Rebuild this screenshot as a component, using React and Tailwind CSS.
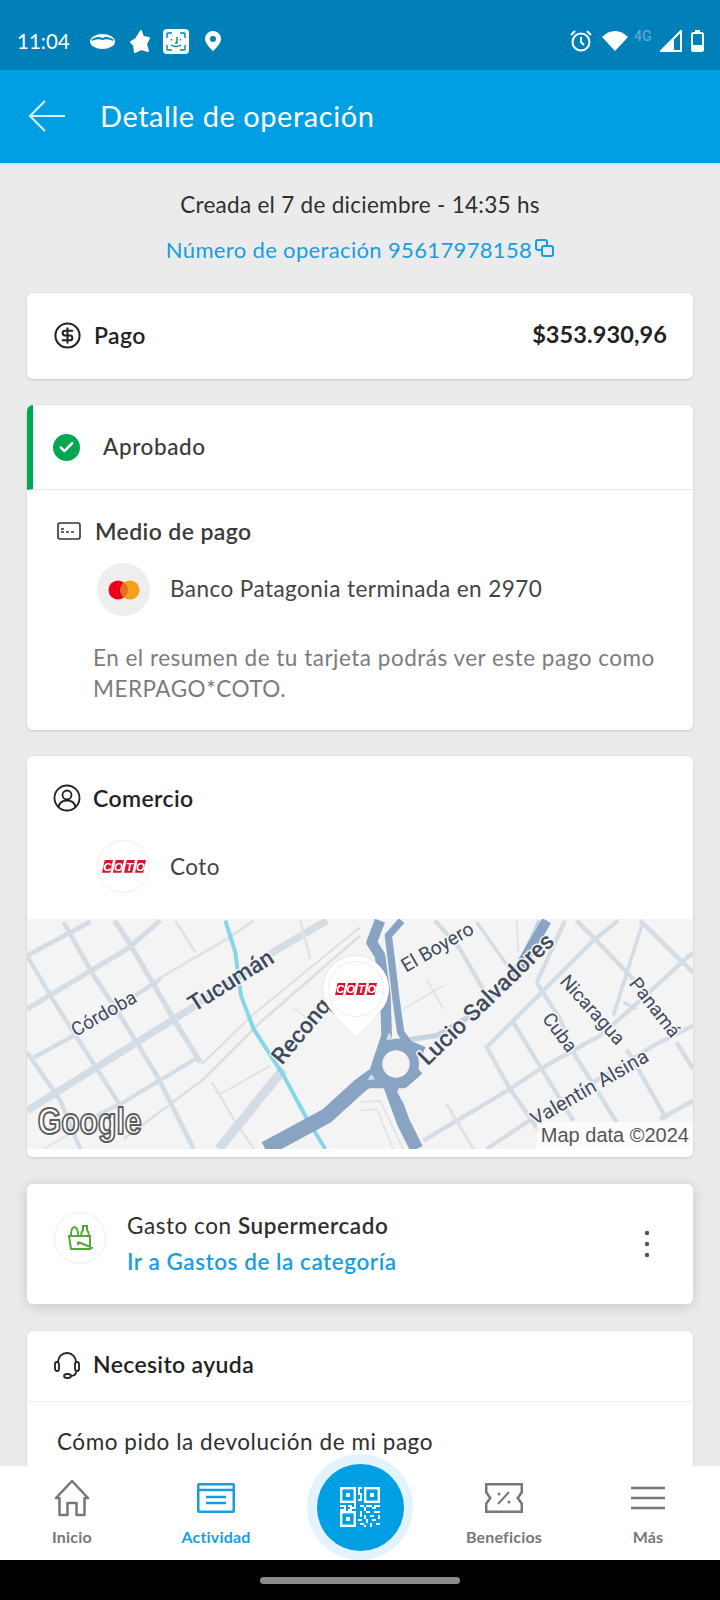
import { Check, CircleDollarSign } from 'lucide-react';

// Map traced at 3x from the reference, left and right halves have their own origin
const roads = {
  left: [
    { w: 22, p: '0,575 490,270 745,95 900,5' },
    { w: 14, p: '0,110 190,8' },
    { w: 15, p: '0,270 300,90 400,5' },
    { w: 13, p: '20,415 150,345 400,180' },
    { w: 8, c: '#dfe3e6', p: '385,185 600,60 680,5' },
    { w: 13, p: '210,590 280,555 505,420' },
    { w: 14, p: '110,10 200,170 280,290 390,470 500,690' },
    { w: 16, p: '262,5 300,60 440,300 520,430' },
    { w: 13, p: '0,110 70,230 210,450 280,560' },
    { w: 13, p: '0,400 100,545 160,690' },
    { w: 8, c: '#dfe3e6', p: '445,5 505,100' },
    { w: 7, c: '#dfe3e6', p: '555,490 620,600 680,690' },
    { w: 8, c: '#dfe3e6', p: '820,5 850,120' },
    { w: 5, c: '#e2e4e6', p: '800,265 840,300' },
    { w: 8, c: '#dcdfe2', p: '290,660 530,480 700,310 999,50' },
    { w: 6, c: '#dcdfe2', p: '525,435 680,285 999,25' },
    { w: 28, p: '575,690 770,450' },
    { w: 6, c: '#dfe3e6', p: '580,525 730,440' },
    { w: 6, c: '#dfe3e6', p: '50,690 280,555' },
  ],
  right: [
    { w: 13, p: '225,5 300,90 380,230' },
    { w: 10, p: '350,10 450,150' },
    { w: 6, c: '#dfe3e6', p: '470,5 475,100' },
    { w: 13, p: '615,5 530,190' },
    { w: 13, p: '775,5 705,60 540,225 380,385 450,510 540,640' },
    { w: 13, p: '460,310 545,450 640,605' },
    { w: 13, p: '530,190 600,300 640,400 770,610' },
    { w: 13, p: '650,5 710,65 810,170 870,230' },
    { w: 13, p: '840,5 999,160' },
    { w: 11, p: '845,20 760,290' },
    { w: 9, p: '790,250 830,270' },
    { w: 13, p: '999,100 790,290 720,350 540,450 450,510 190,665' },
    { w: 13, p: '999,320 880,380 800,430 530,590 380,690' },
    { w: 13, p: '800,390 920,600' },
    { w: 13, p: '950,370 999,450' },
    { w: 13, p: '999,545 900,600' },
    { w: 9, c: '#dfe3e6', p: '260,555 340,690' },
    { w: 5, c: '#dfe3e6', p: '130,270 250,200' },
    { w: 5, c: '#dfe3e6', p: '200,180 250,270' },
    { w: 5, c: '#dfe3e6', p: '0,550 60,545 130,690' },
    { w: 5, c: '#dfe3e6', p: '0,575 50,570 100,690' },
  ],
};

const labels = [
  ['Tucumán', 612, 185, -32, 69, 500],
  ['Córdoba', 230, 283, -30, 57, 400],
  ['El Boyero', 1231, 84, -30, 58, 400],
  ['Lucio Salvadores', 1377, 240, -44, 70, 500],
  ['Nicaragua', 1697, 272, 48, 57, 400],
  ['Cuba', 1599, 340, 53, 57, 400],
  ['Panamá', 1884, 265, 52, 57, 400],
  ['Valentín Alsina', 1687, 505, -30, 60, 400],
];

function CotoLogo({ width }) {
  return (
    <svg width={width} viewBox="0 0 48 14">
      {[0, 12, 24, 36].map((x, i) => (
        <g key={x}>
          <polygon points={`${x + 3},0 ${x + 12},0 ${x + 9},14 ${x},14`} fill="#d6122e" />
          <text x={x + 6} y="11.5" textAnchor="middle" fontSize="12.5" fontWeight="700" fontStyle="italic" fontFamily="Liberation Sans" fill="#fff">
            {'COTO'[i]}
          </text>
        </g>
      ))}
    </svg>
  );
}

function MapView() {
  return (
    <div className="relative h-[230px] overflow-hidden bg-[#f5f4f5]">
      <svg className="block" width="666" height="230" viewBox="0 0 1998 690" fill="none" strokeLinejoin="round">
        {roads.left.map((r, i) => <polyline key={i} points={r.p} stroke={r.c || '#d3dde5'} strokeWidth={r.w} />)}
        <polyline points="595,5 625,100 642,230 680,330 770,470 840,600 895,690" stroke="#86d6e6" strokeWidth="12" />
        <polyline points="715,690 900,590 999,500 1040,470" stroke="#88a4c2" strokeWidth="46" />
        <g transform="translate(999 0)">
          {roads.right.map((r, i) => <polyline key={i} points={r.p} stroke={r.c || '#d3dde5'} strokeWidth={r.w} />)}
          <polyline points="145,362 230,350 350,280 470,160 540,5" stroke="#c5d4e1" strokeWidth="16" />
          <polyline points="470,160 510,90 560,5" stroke="#88a4c2" strokeWidth="30" />
          <g stroke="#88a4c2">
            <polyline points="60,5 35,70 60,110 76,230 80,350 40,470 0,505" strokeWidth="32" />
            <polyline points="125,5 85,50 95,130 108,240 122,340 150,380" strokeWidth="22" />
            <polyline points="90,500 130,610 170,690" strokeWidth="40" />
            <polyline points="190,400 130,375 60,380" strokeWidth="34" />
            <polyline points="0,490 60,490 130,490 175,450" strokeWidth="36" />
            <circle cx="108" cy="435" r="55" fill="#f5f4f5" strokeWidth="28" />
          </g>
          <polygon points="78,362 98,362 88,340" fill="#d3dde5" />
          <polygon points="110,515 135,515 128,550" fill="#f5f4f5" />
          <polygon points="22,482 45,482 35,465" fill="#d3dde5" />
        </g>
        <text x="765" y="440" transform="rotate(-50 765 440)" fontFamily="Roboto" fontSize="69" fontWeight="500" fill="#3e4b5e" stroke="#f5f4f5" strokeWidth="9" paintOrder="stroke">
          Reconq
        </text>
        {labels.map(([t, x, y, a, s, w]) => (
          <text key={t} x={x} y={y} transform={`rotate(${a} ${x} ${y})`} textAnchor="middle" dominantBaseline="central" fontFamily="Roboto" fontSize={s} fontWeight={w} fill="#3e4b5e" stroke="#f5f4f5" strokeWidth="9" paintOrder="stroke">
            {t}
          </text>
        ))}
        <text x="32" y="645" fontFamily="Liberation Sans" fontSize="112" fontWeight="700" textLength="312" lengthAdjust="spacingAndGlyphs" fill="#fff" stroke="#5c5c5c" strokeWidth="6">
          Google
        </text>
      </svg>
      {/* map pin */}
      <div className="absolute left-[296px] top-[37px] flex h-[66px] w-[66px] items-center justify-center rounded-full bg-white shadow-[0_0_2px_rgba(0,0,0,0.15)]">
        <div className="absolute bottom-[-8px] left-[18px] h-[30px] w-[30px] rotate-45 bg-white" />
        <div className="relative flex h-[56px] w-[56px] items-center justify-center rounded-full border border-[#eeeeee] bg-white">
          <CotoLogo width={42} />
        </div>
      </div>
      <span className="absolute bottom-0 right-0 bg-white/70 px-[4px] font-['Liberation_Sans'] text-[20px] leading-[27px] text-[#555555]">Map data ©2024</span>
    </div>
  );
}

function StatusBar() {
  return (
    <div className="flex h-[70px] items-center justify-between bg-[#007fb9] pl-[17px] pr-[16px] pt-[12px] text-white">
      <div className="flex items-center">
        <span className="w-[73px] text-[20.500px] leading-none">11:04</span>
        <svg width="25" height="15" viewBox="0 0 25 15" className="mr-[14px]">
          <ellipse cx="12.500" cy="7.500" rx="12.500" ry="7.500" fill="#fff" />
          <path d="M1 6c4-3 8-4 11.500-2C16 2 20 3 24 6c-1 1-2 1-3 0-3-1-6-1-8.500 0C10 5 7 5 4 6 3 7 2 7 1 6z" fill="#007fb9" />
        </svg>
        <svg width="22" height="25" viewBox="0 0 22 25" className="mr-[12px]">
          <path d="M12 2l2 6 6 1-3 6 2 7-7-2-6 3-1-7-3-3 5-3z" fill="#fff" stroke="#fff" strokeWidth="2" strokeLinejoin="round" />
        </svg>
        <svg width="26" height="25" viewBox="0 0 26 25" className="mr-[16px]" fill="none">
          <rect width="26" height="25" rx="4" fill="#fff" />
          <path d="M4 9V5q0-1 1-1h4M17 4h4q1 0 1 1v4M4 16v4q0 1 1 1h4M17 21h4q1 0 1-1v-4M8.500 10v1.500M17.500 10v1.500M14 8v6h-2M8 16q5 3 10 0" stroke="#007fb9" strokeWidth="1.400" />
        </svg>
        <svg width="16" height="20" viewBox="0 0 16 20">
          <path fillRule="evenodd" d="M8 0a8 8 0 0 1 8 8c0 5-8 12-8 12S0 13 0 8a8 8 0 0 1 8-8zm0 5a3 3 0 1 0 0 6 3 3 0 0 0 0-6z" fill="#fff" />
        </svg>
      </div>
      <div className="flex items-center">
        <svg width="24" height="24" viewBox="0 0 24 24" fill="none" stroke="#fff" strokeWidth="2" className="mr-[9px]">
          <circle cx="12" cy="13" r="8.500" />
          <path d="M12 8v5l3 3M2 6l4-4M22 6l-4-4" />
        </svg>
        <svg width="26" height="20" viewBox="0 0 26 20" className="mr-[6px]">
          <path d="M13 20L0 6q6-6 13-6t13 6z" fill="#fff" />
        </svg>
        <span className="mb-[10px] mr-[3px] w-[23px] font-['Roboto'] text-[14px] font-medium leading-none text-[#5da9d0]">4G</span>
        <svg width="22" height="22" viewBox="0 0 22 22" className="mr-[9px]" fill="none">
          <path d="M1 21L21 1v20z" stroke="#fff" strokeWidth="2" />
          <path d="M1 21L14 8v13z" fill="#fff" />
        </svg>
        <svg width="13" height="22" viewBox="0 0 13 22" fill="none">
          <rect x="1" y="3" width="11" height="18" rx="1.500" stroke="#fff" strokeWidth="2" />
          <rect x="4" y="0" width="5" height="3" fill="#fff" />
          <rect x="1" y="15" width="11" height="6" fill="#fff" />
        </svg>
      </div>
    </div>
  );
}

function QrGlyph() {
  const bits = [
    [9, 0, 2, 1], [9, 0, 1, 3], [9, 3, 2, 1], [10, 3, 1, 4], [9, 6, 2, 1],
    [0, 9, 3, 1], [4, 9, 2, 1], [2, 10, 1, 2], [5, 10, 3, 1], [7, 8, 1, 2], [0, 11, 2, 1], [4, 11, 2, 1],
    [10, 9, 2, 1], [13, 9, 3, 1], [17, 9, 3, 1], [12, 10, 1, 2], [16, 10, 2, 1], [10, 12, 1, 3], [13, 12, 2, 1], [17, 12, 3, 1],
    [12, 14, 1, 2], [15, 14, 2, 1], [19, 14, 1, 2], [9, 16, 2, 1], [13, 16, 1, 2], [16, 16, 2, 1], [10, 18, 2, 1], [15, 18, 1, 2], [18, 18, 2, 1], [12, 19, 1, 1],
  ];
  return (
    <svg width="40" height="40" viewBox="0 0 20 20" fill="#fff">
      {[[0, 0], [12, 0], [0, 12]].map(([x, y]) => (
        <g key={`${x}-${y}`}>
          <rect x={x + 0.6} y={y + 0.6} width="6.800" height="6.800" fill="none" stroke="#fff" strokeWidth="1.200" />
          <rect x={x + 3} y={y + 3} width="2" height="2" />
        </g>
      ))}
      {bits.map(([x, y, w, h], i) => <rect key={i} x={x} y={y} width={w} height={h} />)}
    </svg>
  );
}

function NavItem({ label, active, children }) {
  return (
    <div className="flex flex-col items-center">
      <div className="flex h-[44px] items-center">{children}</div>
      <span className={`mt-[7px] text-[16px] font-bold leading-[20px] tracking-[0.2px] ${active ? 'text-[#169fdf]' : 'text-[#777777]'}`}>{label}</span>
    </div>
  );
}

function BottomNav() {
  return (
    <div className="relative z-10 grid h-[94px] grid-cols-5 bg-white pt-[10px]">
      <NavItem label="Inicio">
        <svg width="36" height="38" viewBox="0 0 36 38" fill="none" stroke="#777777" strokeWidth="2.500">
          <path d="M2 19L18 2l16 17h-3.500v17h-8V24h-9v12h-8V19z" strokeLinejoin="round" />
        </svg>
      </NavItem>
      <NavItem label="Actividad" active>
        <svg width="38" height="30" viewBox="0 0 38 30" fill="none" stroke="#169fdf" strokeWidth="2.500">
          <rect x="1.250" y="1.250" width="35.500" height="27.500" rx="1" />
          <path d="M1 7h36M9 14h20M9 20h20" />
        </svg>
      </NavItem>
      <div />
      <NavItem label="Beneficios">
        <svg width="38" height="30" viewBox="0 0 38 30" fill="none" stroke="#777777" strokeWidth="2.500">
          <path d="M1.250 1.250h35.500v8l-4 5.750 4 5.750v8H1.250v-8l4-5.750-4-5.750z" />
          <path d="M13 21L24 9" strokeWidth="2" />
          <circle cx="14" cy="11" r="1.500" fill="#777777" stroke="none" />
          <circle cx="24" cy="19" r="1.500" fill="#777777" stroke="none" />
        </svg>
      </NavItem>
      <NavItem label="Más">
        <svg width="34" height="24" viewBox="0 0 34 24" stroke="#777777" strokeWidth="2.500">
          <path d="M0 2h34M0 12h34M0 22h34" />
        </svg>
      </NavItem>
    </div>
  );
}

export default function App() {
  return (
    <div className="relative flex h-[1600px] w-[720px] flex-col overflow-hidden bg-[#ebebeb] font-['Lato',sans-serif] text-[#2f2f2f]">
      <StatusBar />

      <div className="flex h-[95px] items-center border-b-2 border-[#c5e6f6] bg-[#009ee3] pb-[2px] pl-[28px] text-white">
        <svg width="38" height="32" viewBox="0 0 38 32" fill="none" stroke="#d4f0fc" strokeWidth="2.200">
          <path d="M37 16H2M17 1L2 16l15 15" />
        </svg>
        <span className="ml-[34px] text-[29px] tracking-[0.55px]">Detalle de operación</span>
      </div>

      <main className="flex-1 overflow-hidden px-[27px]">
        <p className="pt-[26px] text-center text-[22.500px] leading-[28px] tracking-[0.28px]">Creada el 7 de diciembre - 14:35 hs</p>
        <p className="mt-[17px] flex items-center justify-center text-[22px] leading-[28px] tracking-[0.35px] text-[#169fdf]">
          Número de operación 95617978158
          <svg width="19" height="18" viewBox="0 0 19 18" fill="none" stroke="#169fdf" strokeWidth="2" className="mb-[4px] ml-[3px]">
            <rect x="1" y="1" width="11" height="10" rx="2" />
            <rect x="7" y="7" width="11" height="10" rx="2" fill="#ebebeb" />
          </svg>
        </p>

        <section className="mt-[29px] flex h-[86px] items-center justify-between rounded-md bg-white px-[26px] pb-[2px] shadow-[0_1px_3px_rgba(0,0,0,0.15)]">
          <div className="flex items-center gap-[12px]">
            <CircleDollarSign size={29} strokeWidth={1.7} className="text-[#222222]" />
            <span className="text-[23px] font-semibold tracking-[0.4px] text-[#222222]">Pago</span>
          </div>
          <span className="text-[23.500px] font-bold tracking-[0.1px] text-[#222222]">$353.930,96</span>
        </section>

        <section className="mt-[26px] h-[325px] rounded-md bg-white shadow-[0_1px_3px_rgba(0,0,0,0.15)]">
          <div className="flex h-[85px] items-center gap-[23px] rounded-tl-md border-b border-[#e4e4e4] border-l-[6px] border-l-[#00a650] pl-[20px]">
            <span className="flex h-[27px] w-[27px] items-center justify-center rounded-full bg-[#00a650]">
              <Check size={17} strokeWidth={3.5} className="text-white" />
            </span>
            <span className="text-[22.500px] font-medium tracking-[0.6px] text-[#3a3a3a]">Aprobado</span>
          </div>
          <div className="flex items-center pl-[30px] pt-[27px]">
            <svg width="24" height="18" viewBox="0 0 24 18" fill="none" stroke="#333333" strokeWidth="1.600">
              <rect x="1" y="1" width="22" height="16" rx="2" />
              <path d="M4 7h3M4 10h3M9 10h3M14 10h3" />
            </svg>
            <span className="ml-[14px] text-[23px] font-semibold leading-[28px] tracking-[0.4px] text-[#3a3a3a]">Medio de pago</span>
          </div>
          <div className="mt-[18px] flex items-center pl-[70px]">
            <span className="flex h-[53px] w-[53px] items-center justify-center rounded-full bg-[#eeeeee]">
              <svg width="32" height="20" viewBox="0 0 32 20">
                <circle cx="10" cy="10" r="9.500" fill="#eb001b" />
                <circle cx="22" cy="10" r="9.500" fill="#f79e1b" />
                <path d="M16 2.300a9.500 9.500 0 0 1 0 15.400 9.500 9.500 0 0 1 0-15.400z" fill="#e2711d" />
              </svg>
            </span>
            <span className="ml-[20px] pb-[2px] text-[22.500px] tracking-[0.45px] text-[#444444]">Banco Patagonia terminada en 2970</span>
          </div>
          <p className="mt-[27px] pl-[66px] pr-[30px] text-[22.500px] leading-[30.500px] tracking-[0.5px] text-[#7c7c7c]">
            En el resumen de tu tarjeta podrás ver este pago como MERPAGO*COTO.
          </p>
        </section>

        <section className="mt-[26px] h-[401px] rounded-md bg-white shadow-[0_1px_3px_rgba(0,0,0,0.15)]">
          <div className="flex items-center gap-[12px] pl-[26px] pt-[28px]">
            <svg width="28" height="28" viewBox="0 0 28 28" fill="none" stroke="#222222" strokeWidth="1.800">
              <circle cx="14" cy="14" r="12.500" />
              <circle cx="14" cy="11" r="4.500" />
              <path d="M5.500 23c1-5 5-6.500 8.500-6.500s7.500 1.500 8.500 6.500" />
            </svg>
            <span className="text-[23px] font-semibold leading-[28px] tracking-[0.4px] text-[#222222]">Comercio</span>
          </div>
          <div className="mt-[28px] flex items-center pl-[70px]">
            <span className="flex h-[53px] w-[53px] items-center justify-center rounded-full border border-[#eeeeee] bg-white">
              <CotoLogo width={44} />
            </span>
            <span className="ml-[20px] text-[22.500px] tracking-[0.45px] text-[#444444]">Coto</span>
          </div>
          <div className="mt-[26px]">
            <MapView />
          </div>
        </section>

        <section className="mt-[27px] flex h-[120px] items-center rounded-md bg-white pl-[27px] pr-[31px] shadow-[0_2px_14px_rgba(0,0,0,0.16)]">
          <span className="mb-[12px] flex h-[52px] w-[52px] shrink-0 items-center justify-center rounded-full border border-[#eeeeee]">
            <svg width="28" height="26" viewBox="0 0 28 26" fill="none" stroke="#55a83a" strokeWidth="2">
              <path d="M3 11h21v13H5zM5 11c0-6 1-9 3.500-9S12 5 12 11M15 11c0-4 1-5 2-6V1h4v4c1 1 2 2 2 6M12 17l15 6M12 17v3" />
            </svg>
          </span>
          <div className="ml-[21px] flex-1">
            <p className="text-[22.500px] leading-[28px] tracking-[0.55px] text-[#2f2f2f]">
              Gasto con <b className="font-semibold">Supermercado</b>
            </p>
            <p className="mt-[8px] text-[22.500px] font-semibold leading-[28px] tracking-[0.55px] text-[#169fdf]">Ir a Gastos de la categoría</p>
          </div>
          <svg width="6" height="28" viewBox="0 0 6 28" fill="#555555" className="mr-[12px]">
            <circle cx="3" cy="3" r="2.200" />
            <circle cx="3" cy="14" r="2.200" />
            <circle cx="3" cy="25" r="2.200" />
          </svg>
        </section>

        <section className="mt-[27px] h-[200px] rounded-md bg-white shadow-[0_1px_3px_rgba(0,0,0,0.15)]">
          <div className="flex h-[71px] items-center gap-[13px] border-b border-[#ebebeb] pb-[3px] pl-[27px]">
            <svg width="26" height="28" viewBox="0 0 26 28" fill="none" stroke="#222222" strokeWidth="1.800">
              <path d="M4 12V11a9 9 0 0 1 18 0v1M22 21c0 3-3 4-6 4" />
              <rect x="1" y="11" width="4" height="9" rx="2" />
              <rect x="21" y="11" width="4" height="9" rx="2" />
              <ellipse cx="13.500" cy="25" rx="3.500" ry="2" />
            </svg>
            <span className="text-[23px] font-semibold tracking-[0.35px] text-[#222222]">Necesito ayuda</span>
          </div>
          <p className="pl-[30px] pt-[26px] text-[22.500px] leading-[28px] tracking-[0.55px] text-[#2f2f2f]">Cómo pido la devolución de mi pago</p>
        </section>
      </main>

      <BottomNav />
      <div className="relative z-10 flex h-[40px] items-center justify-center bg-black">
        <div className="h-[7px] w-[200px] rounded-full bg-[#8a8a8a]" />
      </div>

      {/* floating QR button */}
      <div className="absolute bottom-[40px] left-[307px] z-20 flex h-[106px] w-[106px] items-center justify-center rounded-full bg-[#e3f3fb]">
        <div className="flex h-[87px] w-[87px] items-center justify-center rounded-full bg-[#009ee3]">
          <QrGlyph />
        </div>
      </div>
    </div>
  );
}
